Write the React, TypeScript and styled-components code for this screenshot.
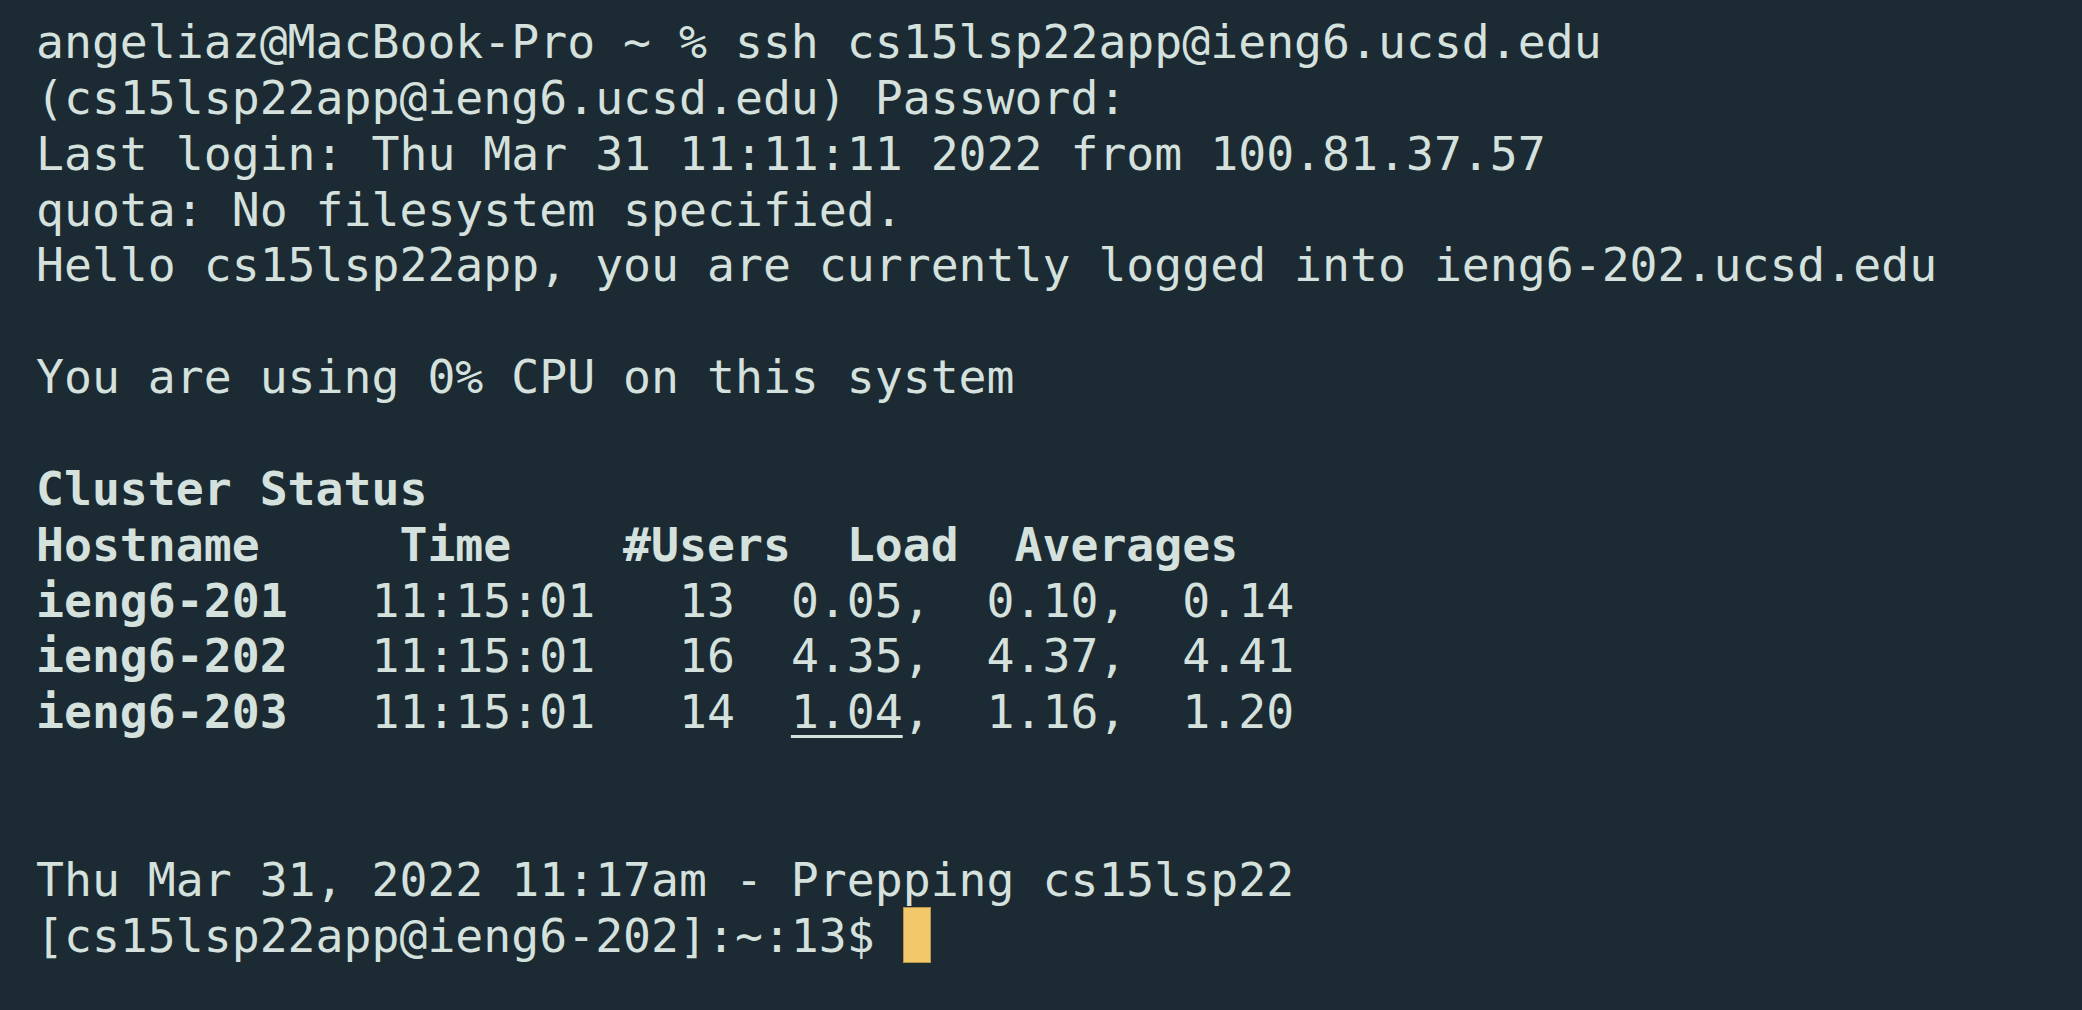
import React from "react";
import styled, { createGlobalStyle } from "styled-components";

const GlobalStyle = createGlobalStyle`
  html, body {
    margin: 0;
    padding: 0;
    background: #1c2a34;
  }
  body {
    width: 2082px;
    height: 1010px;
    overflow: hidden;
  }
`;

const Terminal = styled.main`
  box-sizing: border-box;
  width: 2082px;
  height: 1010px;
  padding: 15px 0 0 36px;
  background: #1c2a34;
  color: #d5e1dd;
  font-family: "DejaVu Sans Mono", "Liberation Mono", monospace;
  font-size: 46.44px;
  line-height: 55.86px;
  display: flex;
  flex-direction: column;
`;

const Line = styled.div`
  white-space: pre;
  height: 55.86px;
`;

const Bold = styled.span`
  font-weight: bold;
`;

const Link = styled.span`
  text-decoration: underline;
  text-decoration-thickness: 3px;
  text-underline-offset: 7px;
`;

const Cursor = styled.span`
  display: inline-block;
  width: 28px;
  height: 56px;
  vertical-align: top;
  margin-top: -2px;
  box-sizing: border-box;
  background: #f2c86b;
  border: 1px solid #b8964e;
`;

type Row = { host: string; time: string; users: string; l1: string; l2: string; l3: string; link?: boolean };

const rows: Row[] = [
  { host: "ieng6-201", time: "11:15:01", users: "13", l1: "0.05", l2: "0.10", l3: "0.14" },
  { host: "ieng6-202", time: "11:15:01", users: "16", l1: "4.35", l2: "4.37", l3: "4.41" },
  { host: "ieng6-203", time: "11:15:01", users: "14", l1: "1.04", l2: "1.16", l3: "1.20", link: true },
];

export default function App() {
  return (
    <>
      <GlobalStyle />
      <Terminal>
        <Line>angeliaz@MacBook-Pro ~ % ssh cs15lsp22app@ieng6.ucsd.edu</Line>
        <Line>(cs15lsp22app@ieng6.ucsd.edu) Password:</Line>
        <Line>Last login: Thu Mar 31 11:11:11 2022 from 100.81.37.57</Line>
        <Line>quota: No filesystem specified.</Line>
        <Line>Hello cs15lsp22app, you are currently logged into ieng6-202.ucsd.edu</Line>
        <Line> </Line>
        <Line>You are using 0% CPU on this system</Line>
        <Line> </Line>
        <Line>
          <Bold>Cluster Status</Bold>
        </Line>
        <Line>
          <Bold>{"Hostname     Time    #Users  Load  Averages"}</Bold>
        </Line>
        {rows.map((r) => (
          <Line key={r.host}>
            <Bold>{r.host}</Bold>
            {"   " + r.time + "   " + r.users + "  "}
            {r.link ? <Link>{r.l1}</Link> : r.l1}
            {",  " + r.l2 + ",  " + r.l3}
          </Line>
        ))}
        <Line> </Line>
        <Line> </Line>
        <Line>Thu Mar 31, 2022 11:17am - Prepping cs15lsp22</Line>
        <Line>
          {"[cs15lsp22app@ieng6-202]:~:13$ "}
          <Cursor />
        </Line>
      </Terminal>
    </>
  );
}
